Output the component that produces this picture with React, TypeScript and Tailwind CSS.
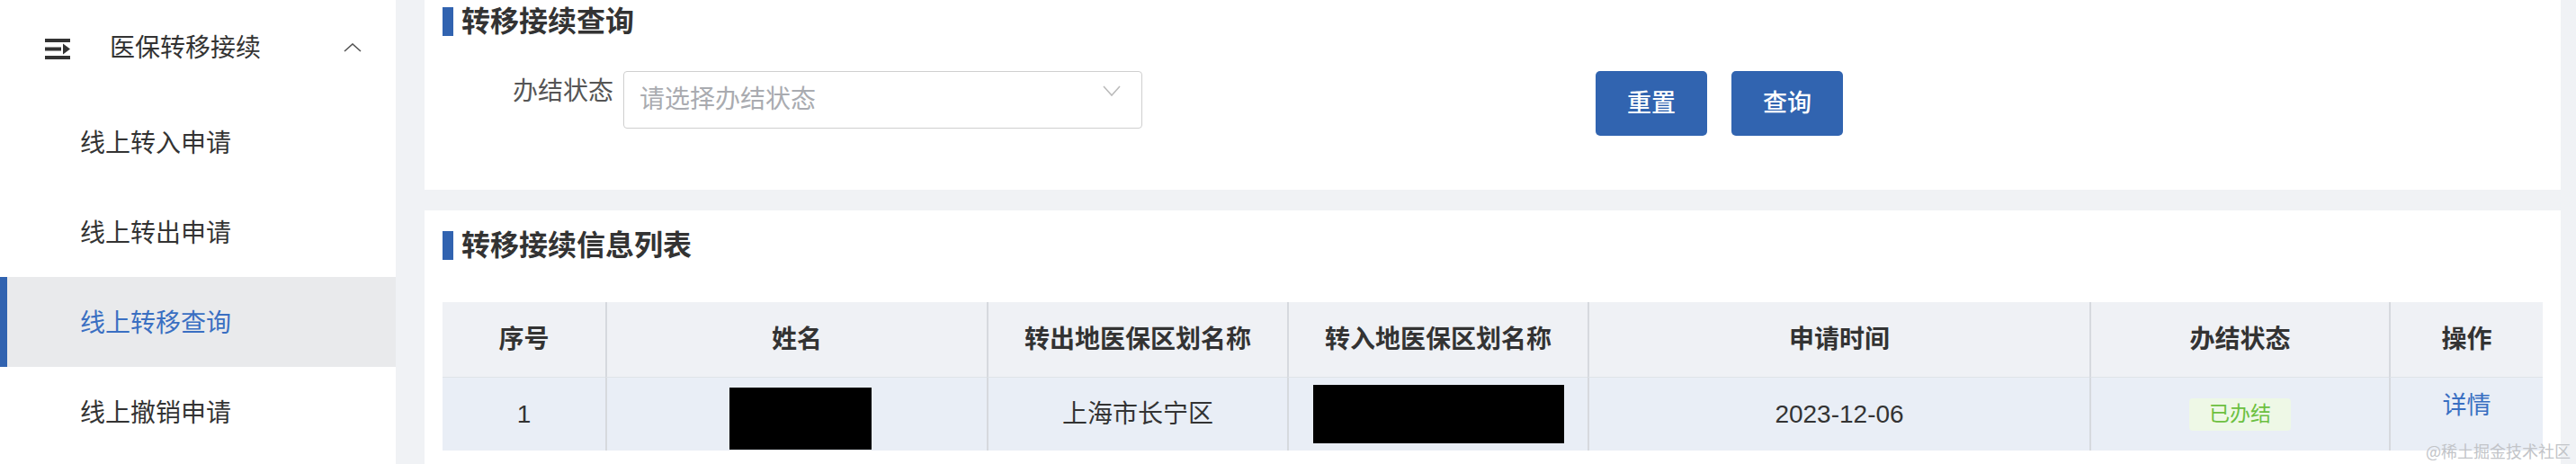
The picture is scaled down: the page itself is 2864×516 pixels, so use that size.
const menuItems = ["线上转入申请", "线上转出申请", "线上转移查询", "线上撤销申请"];

const columns = [
  { title: "序号", width: "w-[181px]" },
  { title: "姓名", width: "w-[424px]" },
  { title: "转出地医保区划名称", width: "w-[334px]" },
  { title: "转入地医保区划名称", width: "w-[334px]" },
  { title: "申请时间", width: "w-[558px]" },
  { title: "办结状态", width: "w-[333px]" },
  { title: "操作", width: "w-[171px]" },
];

const MenuIcon = () => (
  <svg width="28" height="23" viewBox="0 0 28 23" fill="#333">
    <rect x="0" y="0" width="28" height="4" />
    <rect x="0" y="9.5" width="18" height="4" />
    <polygon points="20,5.5 28,11.5 20,17.5" />
    <rect x="0" y="19" width="28" height="4" />
  </svg>
);

const Sidebar: React.FC = () => {
  const active = 2;
  return (
    <div className="w-[440px] shrink-0 bg-white h-full">
      <div className="h-[108px] flex items-center pl-[50px]">
        <MenuIcon />
        <span className="ml-[44px] text-[28px] leading-none text-[#333]">医保转移接续</span>
        <svg className="ml-[92px] -mt-[2px]" width="20" height="10" viewBox="0 0 20 10" fill="none" stroke="#555" strokeWidth="1.6">
          <polyline points="1,9 10,1 19,9" />
        </svg>
      </div>
      {menuItems.map((item, i) => (
        <div
          key={item}
          className={
            i === active
              ? "h-[100px] flex items-center pl-[89px] pt-[3px] bg-[#e9eaec] border-l-[8px] border-[#3163b0]"
              : "h-[100px] flex items-center pl-[89px] pt-[3px]"
          }
        >
          <span
            className={
              i === active
                ? "text-[28px] leading-none text-[#3a6fc2] -ml-[8px]"
                : "text-[28px] leading-none text-[#333]"
            }
          >
            {item}
          </span>
        </div>
      ))}
    </div>
  );
};

const SectionTitle = ({ text }: { text: string }) => (
  <div className="flex items-center h-[32px]">
    <div className="w-[12px] h-[32px] bg-[#3163b0]" />
    <span className="ml-[9px] text-[32px] leading-none font-bold text-[#333]">{text}</span>
  </div>
);

const SearchCard: React.FC = () => (
  <div className="bg-white h-[211px] pt-[8px] px-[20px]">
    <SectionTitle text="转移接续查询" />
    <div className="flex items-start mt-[39px]">
      <div className="w-[201px] h-[46px] flex items-center justify-end pr-[11px] text-[28px] leading-none text-[#555]">
        办结状态
      </div>
      <div className="w-[577px] h-[64px] border border-[#cfcfcf] rounded-[4px] flex items-center justify-between pl-[17px] pr-[23px]">
        <span className="text-[28px] leading-none text-[#a9abb0]">请选择办结状态</span>
        <svg className="self-start mt-[15px]" width="20" height="12" viewBox="0 0 20 12" fill="none" stroke="#bbb" strokeWidth="1.6">
          <polyline points="1,1 10,11 19,1" />
        </svg>
      </div>
      <button className="ml-[504px] w-[124px] h-[72px] rounded-[5px] bg-[#3164b0] text-white text-[27px] font-medium leading-none">
        重置
      </button>
      <button className="ml-[27px] w-[124px] h-[72px] rounded-[5px] bg-[#3164b0] text-white text-[27px] font-medium leading-none">
        查询
      </button>
    </div>
  </div>
);

const ListCard: React.FC = () => (
  <div className="bg-white flex-1 mt-[23px] pt-[23px] px-[20px]">
    <SectionTitle text="转移接续信息列表" />
    <div className="mt-[47px] flex flex-col">
      <div className="flex bg-[#eff1f5]">
        {columns.map((c, i) => (
          <div
            key={c.title}
            className={
              (i === 0 ? "" : "border-l-2 border-[#d6d9de] ") +
              c.width +
              " h-[84px] flex items-center justify-center border-b border-b-[#dfe3e8] text-[28px] leading-none font-bold text-[#333]"
            }
          >
            {c.title}
          </div>
        ))}
      </div>
      <div className="flex bg-[#e9eef6] text-[28px] leading-none text-[#333]">
        <div className="w-[181px] h-[81px] flex items-center justify-center">1</div>
        <div className="w-[424px] h-[81px] flex items-center justify-center border-l-2 border-[#d6d9de]">
          <div className="w-[158px] h-[69px] bg-black mt-[10px] ml-[8px]" />
        </div>
        <div className="w-[334px] h-[81px] flex items-center justify-center border-l-2 border-[#d6d9de]">上海市长宁区</div>
        <div className="w-[334px] h-[81px] flex items-center justify-center border-l-2 border-[#d6d9de]">
          <div className="w-[279px] h-[65px] bg-black" />
        </div>
        <div className="w-[558px] h-[81px] flex items-center justify-center border-l-2 border-[#d6d9de]">2023-12-06</div>
        <div className="w-[333px] h-[81px] flex items-center justify-center border-l-2 border-[#d6d9de]">
          <span className="h-[36px] px-[22px] flex items-center rounded-[4px] bg-[#eef8e6] text-[23px] text-[#6cc040]">已办结</span>
        </div>
        <div className="w-[171px] h-[81px] flex items-center justify-center border-l-2 border-[#d6d9de]">
          <span className="mb-[18px] text-[27px] text-[#3a6fc2]">详情</span>
        </div>
      </div>
    </div>
  </div>
);

export default function App() {
  return (
    <div className="relative w-[2864px] h-[516px] overflow-hidden flex font-['Liberation_Sans','Noto_Sans_CJK_SC',sans-serif] bg-[#f0f2f5]">
      <Sidebar />
      <div className="flex-1 flex flex-col pl-[32px] pr-[17px]">
        <SearchCard />
        <ListCard />
      </div>
      <div className="absolute left-[2697px] top-[488px] text-[18px] text-[#c2c4c8] font-['Noto_Sans_CJK_SC',serif]">
        @稀土掘金技术社区
      </div>
    </div>
  );
}
